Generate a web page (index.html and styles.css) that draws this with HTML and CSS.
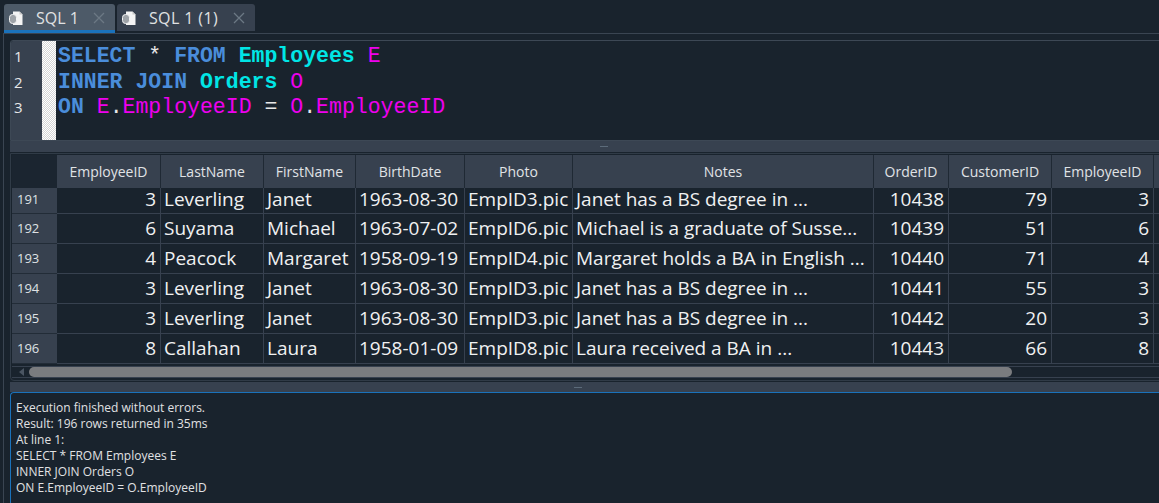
FILE: index.html
```html
<!DOCTYPE html>
<html>
<head>
<meta charset="utf-8">
<link rel="stylesheet" href="styles.css">
</head>
<body>
<div class="tabbar">
  <div class="tab active">
    <svg class="ticon" width="16" height="16" viewBox="0 0 16 16"><path d="M5 1.5h6.5l3 3V15H5z" fill="#f4f4f4"/><path d="M11.5 1.5v3h3" fill="#c8c8c8"/><rect x="1.5" y="4.5" width="7" height="9" rx="3" fill="#9ea3a8" stroke="#f4f4f4"/></svg>
    <span class="tlabel">SQL 1</span>
    <svg class="tclose" width="12" height="12" viewBox="0 0 12 12"><path d="M1 1L11 11M11 1L1 11" stroke="#6c7884" stroke-width="1.3"/></svg>
  </div>
  <div class="tab">
    <svg class="ticon" width="16" height="16" viewBox="0 0 16 16"><path d="M5 1.5h6.5l3 3V15H5z" fill="#f4f4f4"/><path d="M11.5 1.5v3h3" fill="#c8c8c8"/><rect x="1.5" y="4.5" width="7" height="9" rx="3" fill="#9ea3a8" stroke="#f4f4f4"/></svg>
    <span class="tlabel">SQL 1 (1)</span>
    <svg class="tclose" width="12" height="12" viewBox="0 0 12 12"><path d="M1 1L11 11M11 1L1 11" stroke="#6c7884" stroke-width="1.3"/></svg>
  </div>
</div>
<div class="pane">
  <div class="editor">
    <div class="gutter"><div>1</div><div>2</div><div>3</div></div>
    <div class="fold"></div>
    <div class="code">
      <div class="ln"><b class="kw">SELECT</b> <span class="op">*</span> <b class="kw">FROM</b> <b class="tb">Employees</b> <span class="al">E</span></div>
      <div class="ln"><b class="kw">INNER</b> <b class="kw">JOIN</b> <b class="tb">Orders</b> <span class="al">O</span></div>
      <div class="ln"><b class="kw">ON</b> <span class="al">E</span><span class="op">.</span><span class="al">EmployeeID</span> <span class="op">=</span> <span class="al">O</span><span class="op">.</span><span class="al">EmployeeID</span></div>
    </div>
  </div>
  <div class="split"><span class="grip g1"></span></div>
  <div class="frame">
    <div class="row head">
      <div class="corner"></div>
      <div>EmployeeID</div><div>LastName</div><div>FirstName</div><div>BirthDate</div><div>Photo</div><div>Notes</div><div>OrderID</div><div>CustomerID</div><div>EmployeeID</div><div></div>
    </div>
    <div class="rows">
      <div class="row first"><div class="rn">191</div><div class="n">3</div><div>Leverling</div><div>Janet</div><div>1963-08-30</div><div>EmpID3.pic</div><div>Janet has a BS degree in ...</div><div class="n">10438</div><div class="n">79</div><div class="n">3</div><div></div></div>
      <div class="row"><div class="rn">192</div><div class="n">6</div><div>Suyama</div><div>Michael</div><div>1963-07-02</div><div>EmpID6.pic</div><div>Michael is a graduate of Susse...</div><div class="n">10439</div><div class="n">51</div><div class="n">6</div><div></div></div>
      <div class="row"><div class="rn">193</div><div class="n">4</div><div>Peacock</div><div>Margaret</div><div>1958-09-19</div><div>EmpID4.pic</div><div>Margaret holds a BA in English ...</div><div class="n">10440</div><div class="n">71</div><div class="n">4</div><div></div></div>
      <div class="row"><div class="rn">194</div><div class="n">3</div><div>Leverling</div><div>Janet</div><div>1963-08-30</div><div>EmpID3.pic</div><div>Janet has a BS degree in ...</div><div class="n">10441</div><div class="n">55</div><div class="n">3</div><div></div></div>
      <div class="row"><div class="rn">195</div><div class="n">3</div><div>Leverling</div><div>Janet</div><div>1963-08-30</div><div>EmpID3.pic</div><div>Janet has a BS degree in ...</div><div class="n">10442</div><div class="n">20</div><div class="n">3</div><div></div></div>
      <div class="row"><div class="rn">196</div><div class="n">8</div><div>Callahan</div><div>Laura</div><div>1958-01-09</div><div>EmpID8.pic</div><div>Laura received a BA in ...</div><div class="n">10443</div><div class="n">66</div><div class="n">8</div><div></div></div>
    </div>
    <div class="hscroll">
      <div class="track">
        <svg class="arrow" width="6" height="8" viewBox="0 0 6 8"><path d="M5 0L0 4L5 8z" fill="#4a5562"/></svg>
        <div class="thumb"></div>
      </div>
    </div>
  </div>
  <div class="split s2"><span class="grip g2"></span></div>
  <div class="log">
    <div>Execution finished without errors.</div>
    <div>Result: 196 rows returned in 35ms</div>
    <div>At line 1:</div>
    <div>SELECT * FROM Employees E</div>
    <div>INNER JOIN Orders O</div>
    <div>ON E.EmployeeID = O.EmployeeID</div>
  </div>
</div>
</body>
</html>
```
FILE: styles.css
```css
html, body {
  margin: 0;
  padding: 0;
}
body {
  background: #19232d;
  width: 1159px;
  height: 503px;
  overflow: hidden;
  font-family: "Open Sans", "Noto Sans", sans-serif;
  color: #e0e1e3;
}

/* tabs */
.tabbar {
  display: flex;
  align-items: flex-start;
  gap: 2px;
  height: 33px;
  box-sizing: border-box;
  padding: 4px 0 0 4px;
}
.tab {
  display: flex;
  align-items: center;
  height: 27px;
  box-sizing: border-box;
  padding: 0 10px 0 4px;
  background: #37414f;
  border-radius: 3px 3px 0 0;
  font-size: 16px;
  color: #e0e1e3;
}
.tab.active {
  height: 29px;
  background: #4d5a68;
  border-bottom: 3px solid #1a72bb;
  padding-top: 1px;
}
.ticon { flex: none; }
.tlabel {
  margin-left: 12px;
  white-space: nowrap;
}
.tclose {
  margin-left: 14px;
  flex: none;
}
.tab:not(.active) .tlabel { letter-spacing: 0.4px; }
.tab:not(.active) .tclose { margin-left: 15px; }

/* pane */
.pane {
  margin-left: 3px;
  width: 1200px;
  border-top: 1px solid #3a4552;
  border-left: 1px solid #3a4552;
  padding: 6px 0 0 6px;
}

.editor {
  display: flex;
  height: 101px;
  box-sizing: border-box;
  border: 1px solid #3d4855;
  border-radius: 3px 0 0 0;
  background: #19232d;
  overflow: hidden;
}
.gutter {
  width: 28px;
  padding: 3px 0 0 3px;
  background: #37414f;
  font-size: 15px;
  line-height: 25.5px;
  color: #e6e7e9;
}
.fold {
  width: 14px;
  background: repeating-conic-gradient(#ffffff 0 25%, #d6d6d6 0 50%) 0 0 / 2px 2px;
}
.code {
  padding: 3px 0 0 2px;
  font-family: "Liberation Mono", "Courier New", monospace;
  font-size: 21.5px;
  line-height: 25.5px;
}
.ln { white-space: pre; }
.code b { font-weight: 700; }
.kw { color: #4a8ddb; }
.tb { color: #00e6e6; }
.al { color: #ee00ee; }
.op { color: #e8e8e8; }

/* splitter */
.split {
  height: 11px;
  margin-bottom: 1px;
  background: #37414f;
  display: flex;
  align-items: center;
}
.split.s2 {
  height: 10px;
  margin-top: 1px;
  margin-bottom: 0;
}
.grip {
  width: 8px;
  height: 1px;
  background: #5c6b7a;
}
.g1 { margin-left: 590px; }
.g2 { margin-left: 564px; }

/* grid */
.frame {
  border: 1px solid #303b47;
  border-radius: 0 0 0 4px;
  padding: 1px 0 0 1px;
}
.row {
  display: grid;
  grid-template-columns: 45px 104px 103px 92px 109px 108px 301px 75px 103px 102px 80px;
}
.head {
  height: 33px;
  font-size: 14px;
  color: #e0e3e6;
}
.head > div {
  background: #37414f;
  border-right: 1px solid #1f2934;
  display: flex;
  align-items: center;
  justify-content: center;
}
.head > .corner {
  background: #1b2530;
  border-right: none;
}
.rows .row {
  height: 30px;
  font-size: 19px;
  line-height: 29px;
  color: #f0f1f2;
}
.rows .row.first {
  height: 26px;
  line-height: 22px;
}
.rows .row > div {
  border-right: 1px solid #37414f;
  border-bottom: 1px solid #37414f;
  padding: 0 3px;
  white-space: nowrap;
}
.rows .row > div.n {
  text-align: right;
  padding-right: 4px;
}
.rows .row > div.rn {
  background: #37414f;
  border-right: none;
  border-bottom: 1px solid #222c37;
  font-size: 13px;
  padding-left: 5px;
  color: #dfe1e4;
}

.hscroll {
  height: 16px;
  box-sizing: border-box;
  padding: 2px 0;
}
.track {
  display: flex;
  align-items: center;
  height: 12px;
  box-sizing: border-box;
  border-top: 1px solid #37414f;
  border-bottom: 1px solid #37414f;
}
.arrow {
  margin-left: 7px;
  flex: none;
}
.thumb {
  margin-left: 4px;
  width: 983px;
  height: 10px;
  border-radius: 5px;
  background: #7a7c7f;
}

/* log */
.log {
  height: 120px;
  border-top: 1px solid #1a72bb;
  border-left: 1px solid #1a72bb;
  border-radius: 4px 0 0 0;
  padding: 7px 0 0 5px;
  font-size: 12px;
  line-height: 16px;
  color: #e0e1e3;
}
```
